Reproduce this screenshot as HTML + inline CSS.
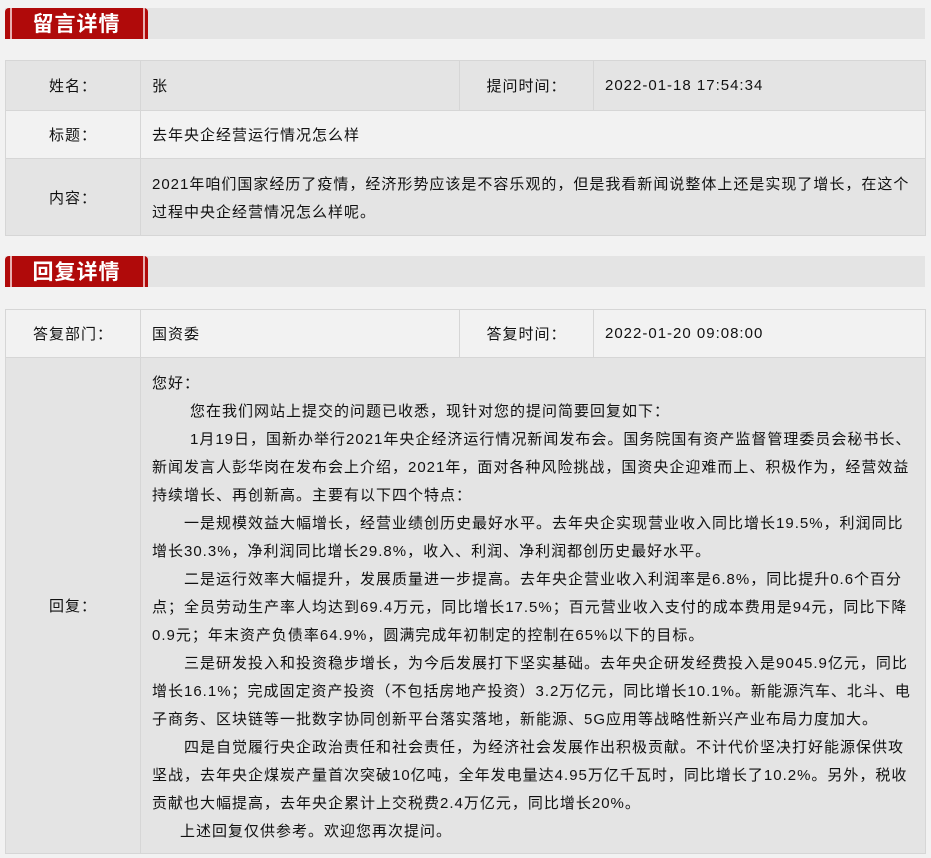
<!DOCTYPE html>
<html><head><meta charset="utf-8">
<style>
body{margin:0;background:#f2f2f2;width:931px;height:858px;overflow:hidden;font-family:"Liberation Sans","Noto Sans CJK SC",sans-serif;color:#111;}
.bar{position:absolute;left:5px;width:920px;height:31px;background:#e4e4e4;}
.tab{position:absolute;left:0;top:0;width:143px;height:31px;background:#b00a0a;border-radius:4px 4px 0 0;}
.tab:before{content:"";position:absolute;left:5px;top:0;width:2px;height:31px;background:#e8b0b0;}
.tab:after{content:"";position:absolute;left:138px;top:0;width:2px;height:31px;background:#e8b0b0;}
.tab span{position:absolute;left:0;width:143px;text-align:center;top:2px;color:#fff;font-weight:bold;font-size:21px;line-height:29px;letter-spacing:1px;}
table{position:absolute;left:5px;width:921px;border-collapse:collapse;font-size:15px;letter-spacing:1px;}
td{border:1px solid #d6d6d6;padding:0;vertical-align:middle;}
.g{background:#e4e4e4;}
.l{background:#f2f2f2;}
.lab{text-align:center;width:134px;}
.v{padding-left:11px;}
.t{padding-left:11px;line-height:28px;white-space:nowrap;}
</style></head><body>
<div class="bar" style="top:8px"><div class="tab"><span>留言详情</span></div></div>
<table style="top:60px">
<tr class="g" style="height:50px"><td class="lab">姓名：</td><td class="v" style="width:307px">张</td><td class="lab" style="width:133px">提问时间：</td><td class="v">2022-01-18 17:54:34</td></tr>
<tr class="l" style="height:48px"><td class="lab">标题：</td><td class="v" colspan="3">去年央企经营运行情况怎么样</td></tr>
<tr class="g" style="height:77px"><td class="lab">内容：</td><td class="t" colspan="3" style="padding-top:4px">2021年咱们国家经历了疫情，经济形势应该是不容乐观的，但是我看新闻说整体上还是实现了增长，在这个<br>过程中央企经营情况怎么样呢。</td></tr>
</table>
<div class="bar" style="top:256px"><div class="tab"><span>回复详情</span></div></div>
<table style="top:309px">
<tr class="l" style="height:48px"><td class="lab">答复部门：</td><td class="v" style="width:307px">国资委</td><td class="lab" style="width:133px">答复时间：</td><td class="v">2022-01-20 09:08:00</td></tr>
<tr class="g" style="height:496px"><td class="lab">回复：</td><td class="t" colspan="3" style="padding-top:4px">您好：<br>
<span style="padding-left:38px"></span>您在我们网站上提交的问题已收悉，现针对您的提问简要回复如下：<br>
<span style="padding-left:38px"></span>1月19日，国新办举行2021年央企经济运行情况新闻发布会。国务院国有资产监督管理委员会秘书长、<br>
新闻发言人彭华岗在发布会上介绍，2021年，面对各种风险挑战，国资央企迎难而上、积极作为，经营效益<br>
持续增长、再创新高。主要有以下四个特点：<br>
<span style="padding-left:32px"></span>一是规模效益大幅增长，经营业绩创历史最好水平。去年央企实现营业收入同比增长19.5%，利润同比<br>
增长30.3%，净利润同比增长29.8%，收入、利润、净利润都创历史最好水平。<br>
<span style="padding-left:32px"></span>二是运行效率大幅提升，发展质量进一步提高。去年央企营业收入利润率是6.8%，同比提升0.6个百分<br>
点；全员劳动生产率人均达到69.4万元，同比增长17.5%；百元营业收入支付的成本费用是94元，同比下降<br>
0.9元；年末资产负债率64.9%，圆满完成年初制定的控制在65%以下的目标。<br>
<span style="padding-left:32px"></span>三是研发投入和投资稳步增长，为今后发展打下坚实基础。去年央企研发经费投入是9045.9亿元，同比<br>
增长16.1%；完成固定资产投资（不包括房地产投资）3.2万亿元，同比增长10.1%。新能源汽车、北斗、电<br>
子商务、区块链等一批数字协同创新平台落实落地，新能源、5G应用等战略性新兴产业布局力度加大。<br>
<span style="padding-left:32px"></span>四是自觉履行央企政治责任和社会责任，为经济社会发展作出积极贡献。不计代价坚决打好能源保供攻<br>
坚战，去年央企煤炭产量首次突破10亿吨，全年发电量达4.95万亿千瓦时，同比增长了10.2%。另外，税收<br>
贡献也大幅提高，去年央企累计上交税费2.4万亿元，同比增长20%。<br>
<span style="padding-left:28px"></span>上述回复仅供参考。欢迎您再次提问。</td></tr>
</table>
</body></html>
